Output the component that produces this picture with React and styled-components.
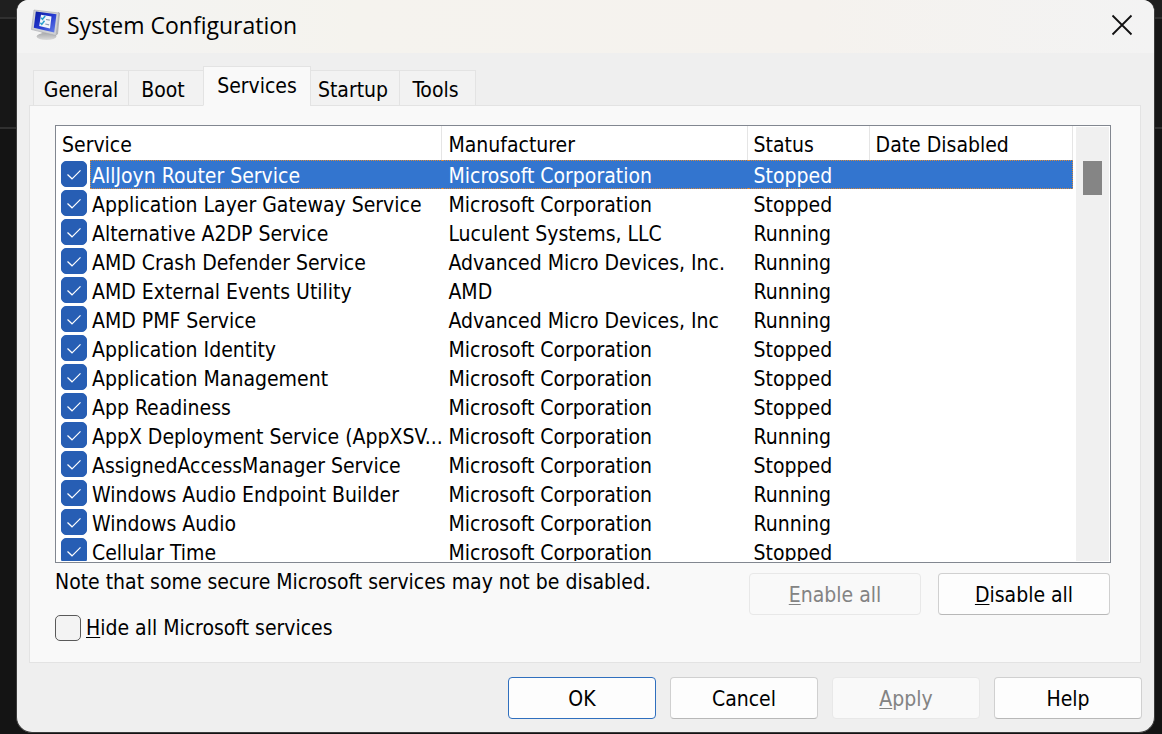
import React, { useState } from "react";
import styled, { createGlobalStyle, css } from "styled-components";

const GlobalStyle = createGlobalStyle`
  *, *::before, *::after { box-sizing: border-box; }
  body {
    margin: 0;
    background: linear-gradient(#1f1f1f 0 17px, #303030 17px 19px, #171717 19px 127px, #303030 127px 129px, #141414 129px);
    color: #000;
    font-family: "DejaVu Sans Condensed", "Noto Sans", sans-serif;
    font-size: 21px;
    line-height: 28px;
  }
  button, input { font: inherit; color: inherit; margin: 0; }
`;

const Desktop = styled.div`
  padding: 0 7px 1px 16px;
  min-height: 100vh;
  display: flex;
  flex-direction: column;
`;

const Window = styled.main`
  flex: 1;
  display: flex;
  flex-direction: column;
  background: #efefef;
  border: 1px solid #3c3c3c;
  border-top: 0;
  border-radius: 12px 12px 16px 16px;
  overflow: hidden;
`;

const TitleBar = styled.header`
  display: flex;
  align-items: center;
  height: 53px;
  padding: 0 21px 4px 14px;
  background: linear-gradient(90deg, #f3f3f3, #f5f3ee 30%, #f5f2ee 70%, #f3f3f3);
`;

const Title = styled.h1`
  flex: 1;
  margin: 0 0 0 5px;
  font-family: "Open Sans", "Noto Sans", sans-serif;
  font-size: 23px;
  font-weight: 400;
  line-height: 32px;
`;

const CloseButton = styled.button`
  display: flex;
  padding: 0;
  border: 0;
  background: none;
`;

const Content = styled.div`
  padding: 13px 13px 0 12px;
`;

const Tabs = styled.div`
  display: flex;
  align-items: flex-end;
  height: 40px;
  padding-left: 4px;
  margin-bottom: -1px;
`;

const Tab = styled.button`
  flex: none;
  width: ${(p) => p.$width}px;
  height: 36px;
  padding: 4px ${(p) => p.$trail}px 0 0;
  margin-right: -1px;
  border: 1px solid #e3e3e3;
  background: #f2f2f2;
  ${(p) =>
    p.$active &&
    css`
      height: 40px;
      padding: 0;
      border-bottom-color: #f9f9f9;
      background: #f9f9f9;
    `}
`;

const Panel = styled.section`
  height: 558px;
  padding: 19px 29px 0 25px;
  border: 1px solid #e3e3e3;
  background: #f9f9f9;
`;

const ListBox = styled.div`
  display: flex;
  height: 438px;
  border: 1px solid #828790;
  background: #fff;
  overflow: hidden;
`;

const TableArea = styled.div`
  flex: 1;
  min-width: 0;
  height: 435px;
  overflow: hidden;
`;

const Table = styled.table`
  width: 100%;
  table-layout: fixed;
  border-collapse: separate;
  border-spacing: 0;
`;

const Column = styled.col`
  width: ${(p) => p.$width};
`;

const HeadCell = styled.th`
  height: 34px;
  padding: 4px 6px 0;
  border-right: 1px solid #e5e5e5;
  font-weight: 400;
  text-align: left;
  white-space: nowrap;
`;

const selected = css`
  border-color: #d98a3d;
  border-style: dotted;
  background: #3375cf;
  color: #fff;
`;

const Cell = styled.td`
  height: 29px;
  padding: 4px 6px 0;
  line-height: 23px;
  white-space: nowrap;
  border: 1px solid transparent;
  border-width: 1px 0;
  ${(p) => p.$selected && selected}
  &:last-child { border-right-width: 1px; }
`;

const NameCell = styled.td`
  height: 29px;
  padding: 0 0 0 5px;
`;

const NameLabel = styled.label`
  display: flex;
  gap: 3px;
`;

const Name = styled.span`
  flex: 1;
  min-width: 0;
  height: 29px;
  padding: 4px 0 0 1px;
  border: 1px solid transparent;
  border-right-width: 0;
  line-height: 23px;
  white-space: nowrap;
  ${(p) => p.$selected && selected}
`;

const CheckWrap = styled.span`
  display: grid;
  flex: none;
  align-content: start;
  padding-top: ${(p) => (p.$inRow ? 1 : 0)}px;
  > * { grid-area: 1 / 1; }
  > svg { pointer-events: none; visibility: hidden; }
  > input:checked + svg { visibility: visible; }
`;

const CheckInput = styled.input`
  appearance: none;
  width: 26px;
  height: 26px;
  border: 1px solid #5a5a5a;
  border-radius: 5px;
  background: #f3f3f3;
  &:checked { border-color: #275eb4; background: #275eb4; }
`;

const Track = styled.div`
  flex: none;
  width: 33px;
  margin: 1px 1px 1px 3px;
  padding: 34px 7px 0;
  background: #f0f0f0;
`;

const Thumb = styled.div`
  height: 34px;
  background: #858585;
`;

const Below = styled.div`
  display: flex;
  justify-content: space-between;
`;

const Note = styled.p`
  margin: 5px 0 18px;
`;

const HideLabel = styled.label`
  display: flex;
  align-items: center;
  gap: 5px;
`;

const Actions = styled.div`
  display: flex;
  gap: 17px;
  padding: 10px 1px 0 0;
`;

const Footer = styled.footer`
  display: flex;
  justify-content: flex-end;
  gap: 14px;
  padding: 14px 12px 0;
`;

const Button = styled.button`
  width: ${(p) => (p.$wide ? 172 : 148)}px;
  height: 42px;
  padding: 2px 0 0;
  border: 1px solid #d0d0d0;
  border-bottom-color: #b8b8b8;
  border-radius: 4px;
  background: #fdfdfd;
  ${(p) => p.$primary && css`border-color: #2f6fbe;`}
  &:disabled {
    border-color: #e8e8e8;
    background: #f9f9f9;
    color: #838383;
  }
`;

const Key = styled.span`
  text-decoration: underline;
  text-decoration-thickness: 1px;
  text-underline-offset: 2px;
`;

const MS = "Microsoft Corporation";
const SERVICES = [
  ["AllJoyn Router Service", MS, "Stopped"],
  ["Application Layer Gateway Service", MS, "Stopped"],
  ["Alternative A2DP Service", "Luculent Systems, LLC", "Running"],
  ["AMD Crash Defender Service", "Advanced Micro Devices, Inc.", "Running"],
  ["AMD External Events Utility", "AMD", "Running"],
  ["AMD PMF Service", "Advanced Micro Devices, Inc", "Running"],
  ["Application Identity", MS, "Stopped"],
  ["Application Management", MS, "Stopped"],
  ["App Readiness", MS, "Stopped"],
  ["AppX Deployment Service (AppXSV...", MS, "Running"],
  ["AssignedAccessManager Service", MS, "Stopped"],
  ["Windows Audio Endpoint Builder", MS, "Running"],
  ["Windows Audio", MS, "Running"],
  ["Cellular Time", MS, "Stopped"],
];

const COLUMNS = [
  ["Service", "38%"],
  ["Manufacturer", "30%"],
  ["Status", "12%"],
  ["Date Disabled", "20%"],
];

const TABS = [
  ["General", 96, 0],
  ["Boot", 76, 6],
  ["Services", 108, 0],
  ["Startup", 90, 4],
  ["Tools", 77, 4],
];

function MonitorIcon() {
  return (
    <svg width="31" height="32" viewBox="0 0 31 32" aria-hidden="true">
      <defs>
        <linearGradient id="screen" x1="0" y1="0" x2="1" y2="1">
          <stop offset="0" stopColor="#0a1ba0" />
          <stop offset="0.5" stopColor="#2438cf" />
          <stop offset="1" stopColor="#6b84ea" />
        </linearGradient>
        <linearGradient id="stand" x1="0" y1="0" x2="0" y2="1">
          <stop offset="0" stopColor="#a9aaac" />
          <stop offset="1" stopColor="#dcdcdc" />
        </linearGradient>
      </defs>
      <path d="M11 21l11 3 1 4H10z" fill="url(#stand)" />
      <ellipse cx="15.500" cy="27.500" rx="10" ry="3.500" fill="url(#stand)" />
      <path d="M27 3l2 1-2 21-3 2z" fill="#b4b5b8" />
      <path d="M3 1l25 3-3 22.500L.5 20.500z" fill="#d0d1d4" stroke="#a8aaae" strokeWidth=".6" />
      <path d="M4.800 2.600l20.700 2.700-2.300 18.200L2.800 18.800z" fill="url(#screen)" />
      <path d="M10 5.800L20.500 7.500 19 19.500 8.200 17z" fill="#f2f5fa" />
      <path d="M10.200 8.800l1.300 1.500 2.700-3.300M9.400 13.800l1.400 1.600 2.700-3.600" fill="none" stroke="#2a9fce" strokeWidth="1.500" />
      <path d="M15 10.500l3.800.6M14.300 15l3.800.8" stroke="#8d9ab0" strokeWidth="1.200" />
    </svg>
  );
}

function CheckBox({ inRow, ...props }) {
  return (
    <CheckWrap $inRow={inRow}>
      <CheckInput type="checkbox" {...props} />
      <svg width="26" height="26" viewBox="0 0 26 26" aria-hidden="true">
        <path d="M6.500 13.500l4.500 4.300 8.500-8.500" fill="none" stroke="#fff" strokeWidth="1.200" />
      </svg>
    </CheckWrap>
  );
}

export default function App() {
  const [tab, setTab] = useState("Services");
  return (
    <>
      <GlobalStyle />
      <Desktop>
        <Window>
          <TitleBar>
            <MonitorIcon />
            <Title>System Configuration</Title>
            <CloseButton aria-label="Close">
              <svg width="22" height="22" viewBox="0 0 22 22" aria-hidden="true">
                <path d="M1.500 1.500l19 19M20.500 1.500l-19 19" stroke="#111" strokeWidth="1.800" />
              </svg>
            </CloseButton>
          </TitleBar>
          <Content>
            <Tabs role="tablist">
              {TABS.map(([name, width, trail]) => (
                <Tab
                  key={name}
                  role="tab"
                  aria-selected={tab === name}
                  $width={width}
                  $trail={trail}
                  $active={tab === name}
                  onClick={() => setTab(name)}
                >
                  {name}
                </Tab>
              ))}
            </Tabs>
            <Panel role="tabpanel" aria-label={tab}>
              <ListBox>
                <TableArea>
                  <Table>
                    <colgroup>
                      {COLUMNS.map(([name, width]) => (
                        <Column key={name} $width={width} />
                      ))}
                    </colgroup>
                    <thead>
                      <tr>
                        {COLUMNS.map(([name]) => (
                          <HeadCell key={name}>{name}</HeadCell>
                        ))}
                      </tr>
                    </thead>
                    <tbody>
                      {SERVICES.map(([name, maker, status], i) => (
                        <tr key={name}>
                          <NameCell>
                            <NameLabel>
                              <CheckBox inRow defaultChecked />
                              <Name $selected={i === 0}>{name}</Name>
                            </NameLabel>
                          </NameCell>
                          <Cell $selected={i === 0}>{maker}</Cell>
                          <Cell $selected={i === 0}>{status}</Cell>
                          <Cell $selected={i === 0} />
                        </tr>
                      ))}
                    </tbody>
                  </Table>
                </TableArea>
                <Track>
                  <Thumb />
                </Track>
              </ListBox>
              <Below>
                <div>
                  <Note>Note that some secure Microsoft services may not be disabled.</Note>
                  <HideLabel>
                    <CheckBox />
                    <span><Key>H</Key>ide all Microsoft services</span>
                  </HideLabel>
                </div>
                <Actions>
                  <Button $wide disabled><Key>E</Key>nable all</Button>
                  <Button $wide><Key>D</Key>isable all</Button>
                </Actions>
              </Below>
            </Panel>
          </Content>
          <Footer>
            <Button $primary>OK</Button>
            <Button>Cancel</Button>
            <Button disabled><Key>A</Key>pply</Button>
            <Button>Help</Button>
          </Footer>
        </Window>
      </Desktop>
    </>
  );
}
